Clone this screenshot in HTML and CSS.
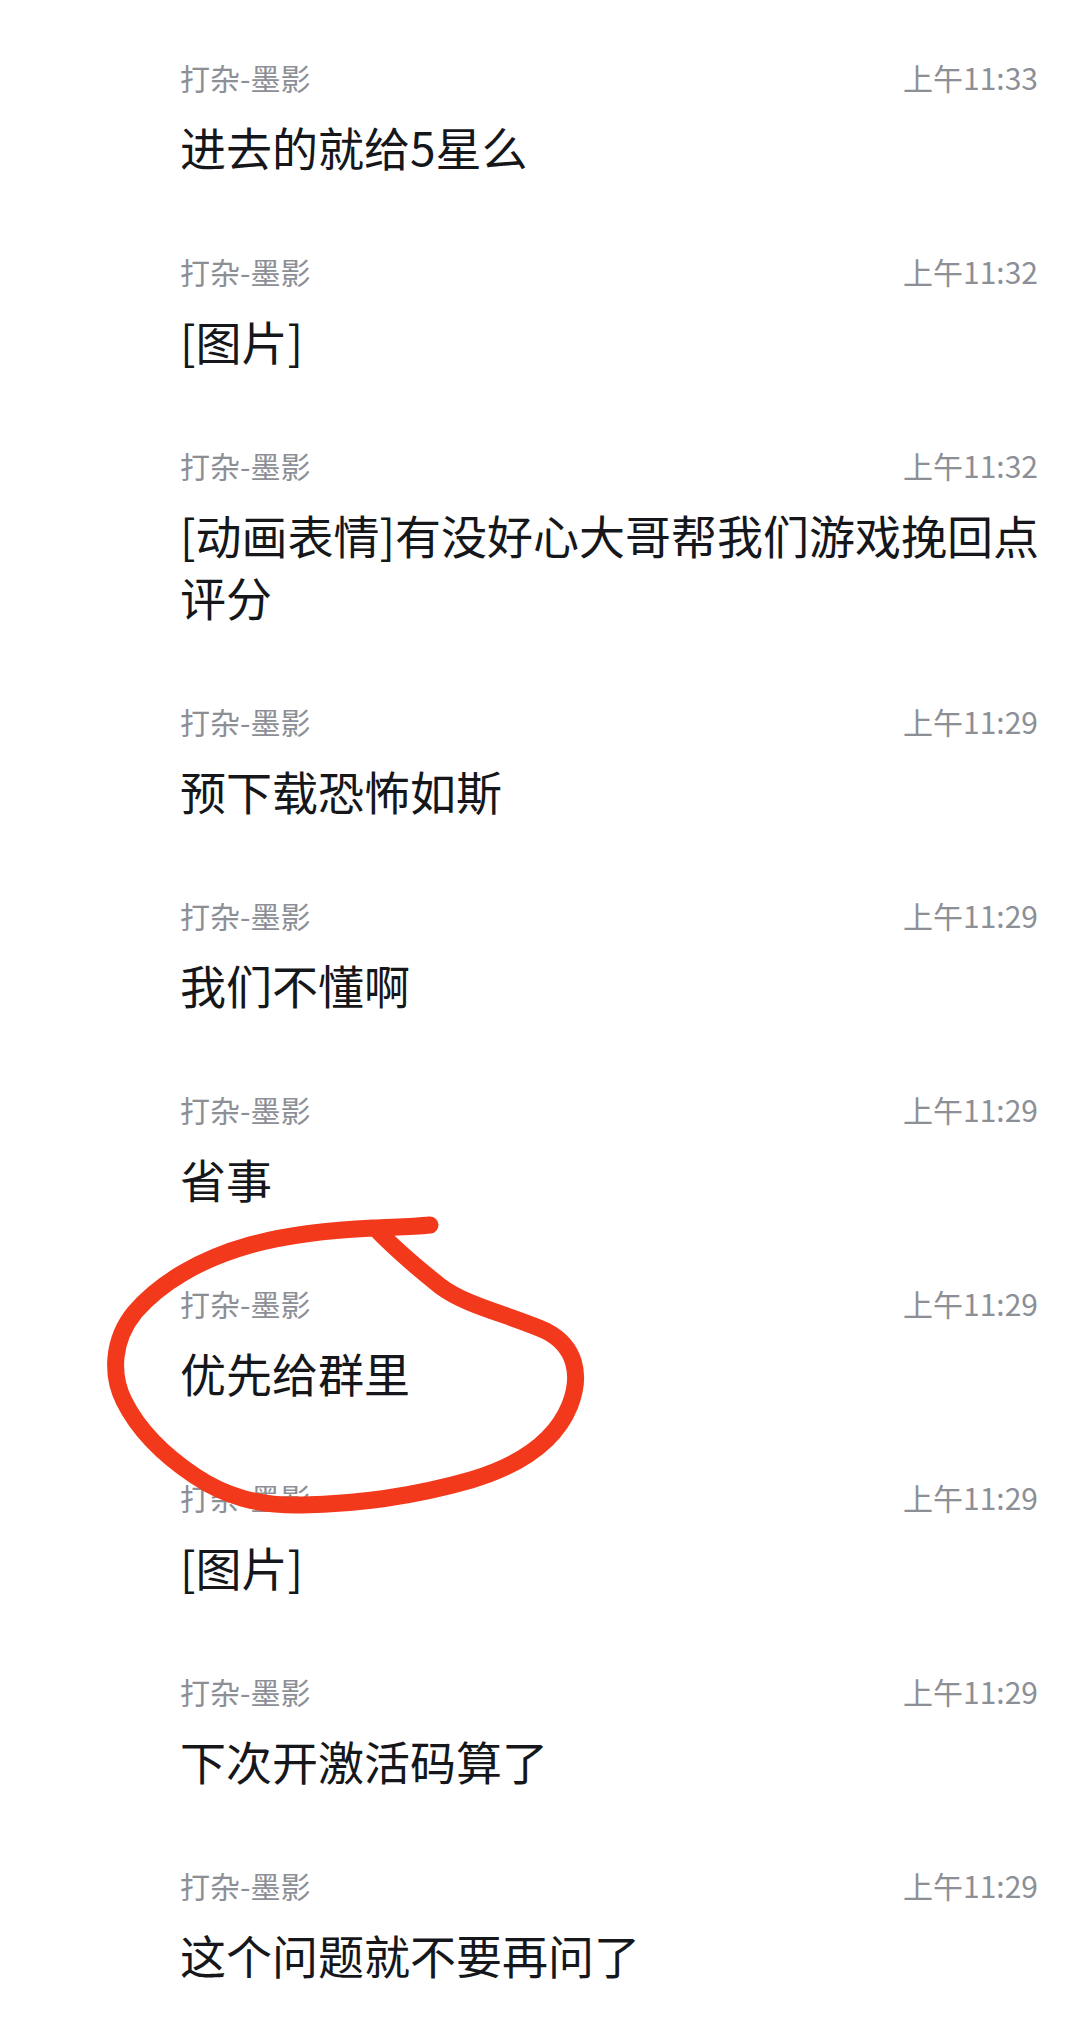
FILE: index.html
```html
<!DOCTYPE html>
<html lang="zh-CN">
<head>
    <meta charset="UTF-8">
    <meta name="viewport" content="width=device-width, initial-scale=1.0">
    <title>聊天记录</title>
    <link rel="stylesheet" href="styles.css">
</head>
<body>
    <main class="msg-list">
        <div class="msg">
            <div class="msg-head"><span class="msg-name">打杂-墨影</span><span class="msg-time">上午11:33</span></div>
            <p class="msg-text">进去的就给5星么</p>
        </div>
        <div class="msg">
            <div class="msg-head"><span class="msg-name">打杂-墨影</span><span class="msg-time">上午11:32</span></div>
            <p class="msg-text">[图片]</p>
        </div>
        <div class="msg">
            <div class="msg-head"><span class="msg-name">打杂-墨影</span><span class="msg-time">上午11:32</span></div>
            <p class="msg-text">[动画表情]有没好心大哥帮我们游戏挽回点评分</p>
        </div>
        <div class="msg">
            <div class="msg-head"><span class="msg-name">打杂-墨影</span><span class="msg-time">上午11:29</span></div>
            <p class="msg-text">预下载恐怖如斯</p>
        </div>
        <div class="msg">
            <div class="msg-head"><span class="msg-name">打杂-墨影</span><span class="msg-time">上午11:29</span></div>
            <p class="msg-text">我们不懂啊</p>
        </div>
        <div class="msg">
            <div class="msg-head"><span class="msg-name">打杂-墨影</span><span class="msg-time">上午11:29</span></div>
            <p class="msg-text">省事</p>
        </div>
        <div class="msg">
            <div class="msg-head"><span class="msg-name">打杂-墨影</span><span class="msg-time">上午11:29</span></div>
            <p class="msg-text">优先给群里</p>
        </div>
        <div class="msg">
            <div class="msg-head"><span class="msg-name">打杂-墨影</span><span class="msg-time">上午11:29</span></div>
            <p class="msg-text">[图片]</p>
        </div>
        <div class="msg">
            <div class="msg-head"><span class="msg-name">打杂-墨影</span><span class="msg-time">上午11:29</span></div>
            <p class="msg-text">下次开激活码算了</p>
        </div>
        <div class="msg">
            <div class="msg-head"><span class="msg-name">打杂-墨影</span><span class="msg-time">上午11:29</span></div>
            <p class="msg-text">这个问题就不要再问了</p>
        </div>
    </main>

    <!-- 手画的红圈 -->
    <svg class="scribble" width="1080" height="2044" viewBox="0 0 1080 2044">
        <path d="M430,1225 C410,1227 390,1227 373,1228
                 C330,1230 290,1234 250,1245
                 C200,1259 160,1283 135,1312
                 C112,1340 111,1375 124,1401
                 C139,1431 165,1456 195,1476
                 C225,1496 257,1506 302,1505
                 C362,1504 422,1494 471,1480
                 C521,1465 556,1440 570,1405
                 C582,1374 575,1346 546,1331
                 C511,1315 466,1306 440,1286
                 C415,1266 395,1249 376,1229"
              fill="none" stroke="#f3391b" stroke-width="17" stroke-linecap="round" stroke-linejoin="round"/>
    </svg>
</body>
</html>
```

FILE: styles.css
```css
body {
    margin: 0;
    background-color: #fff;
    font-family: "Noto Sans CJK SC", "Noto Sans", sans-serif;
    position: relative;
}

.msg-list {
    padding-top: 37px;
}

.msg {
    padding: 20px 0 54px 180px;
}

.msg-head {
    display: flex;
    justify-content: space-between;
    align-items: center;
    height: 40px;
    padding-right: 42px;
}

.msg-name,
.msg-time {
    font-size: 30px;
    color: #8c8f95;
}

.msg-text {
    margin: 18px 0 0;
    padding-right: 20px;
    font-size: 46px;
    line-height: 62px;
    color: #15171b;
}

.scribble {
    position: absolute;
    top: 0;
    left: 0;
    pointer-events: none;
}
```
